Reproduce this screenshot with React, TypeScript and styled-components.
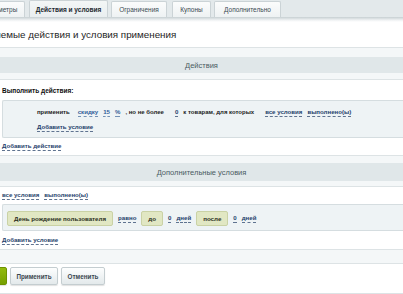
import React from 'react';
import styled, { createGlobalStyle } from 'styled-components';

const GlobalStyle = createGlobalStyle`
  html, body {
    margin: 0;
    padding: 0;
    background: #fff;
    overflow: hidden;
  }
  body {
    font-family: "Liberation Sans", Arial, sans-serif;
    color: #000;
  }
`;

const Page = styled.div`
  width: 403px;
  height: 294px;
  overflow: hidden;
  display: flex;
  flex-direction: column;
`;

const TabBar = styled.div`
  height: 17px;
  flex-shrink: 0;
  background: #e3e9eb;
  display: flex;
  align-items: flex-end;
  gap: 3px;
`;

const Tab = styled.div<{ active?: boolean; w: number; offset?: number }>`
  width: ${p => p.w}px;
  height: ${p => (p.active ? 17 : 16)}px;
  box-sizing: border-box;
  margin-left: ${p => p.offset ?? 0}px;
  display: flex;
  align-items: center;
  justify-content: center;
  font-size: 6.5px;
  font-weight: ${p => (p.active ? 'bold' : 'normal')};
  color: ${p => (p.active ? '#1d2a30' : '#3a4a52')};
  background: ${p => (p.active ? 'linear-gradient(#f3f6f6, #e9eef0)' : 'linear-gradient(#fbfcfc, #eef2f3)')};
  border: 1px solid #cbd3d6;
  border-bottom: none;
  border-radius: 2px 2px 0 0;
  white-space: nowrap;
  flex-shrink: 0;
`;

const TabShadow = styled.div`
  height: 5px;
  flex-shrink: 0;
  background: linear-gradient(#c6cfd2, #eef1f2 60%, #fff);
`;

const Title = styled.div`
  height: 25px;
  flex-shrink: 0;
  display: flex;
  align-items: center;
  margin-left: -40px;
  font-size: 9.8px;
  color: #1e1e1e;
  white-space: nowrap;
`;

const SectionHead = styled.div<{ top: number; bottom: number }>`
  flex-shrink: 0;
  background: #f4f7f8;
  padding: ${p => p.top}px 0 ${p => p.bottom}px;
  border-top: 1px solid #dde3e5;
  border-bottom: 1px solid #dde3e5;
`;

const SectionBar = styled.div<{ h: number }>`
  height: ${p => p.h}px;
  background: #e0e7e9;
  display: flex;
  align-items: center;
  justify-content: center;
  font-size: 7.5px;
  color: #4a5b62;
`;

const Body = styled.div`
  flex-shrink: 0;
  padding-left: 2px;
  display: flex;
  flex-direction: column;
`;

const Label = styled.div`
  font-size: 6.5px;
  font-weight: bold;
  color: #111;
  height: 20px;
  display: flex;
  align-items: center;
`;

const Box = styled.div<{ pad: number }>`
  background: #eef3f5;
  border: 1px solid #d5dde0;
  border-right: none;
  border-radius: 2px 0 0 2px;
  padding: 3px 0 2px ${p => p.pad}px;
  display: flex;
  flex-direction: column;
`;

const Row = styled.div<{ h: number }>`
  display: flex;
  align-items: center;
  height: ${p => p.h}px;
  gap: 5px;
  white-space: nowrap;
  font-size: 6px;
  font-weight: bold;
  color: #1c1c1c;
`;

const Link = styled.span<{ light?: boolean }>`
  color: ${p => (p.light ? '#33609a' : '#1f3f6c')};
  font-weight: bold;
  font-size: 6.1px;
  border-bottom: 1px dashed ${p => (p.light ? '#7391b6' : '#5f7390')};
  line-height: 8px;
  white-space: nowrap;
`;

const Word = styled.span<{ mr?: number }>`
  margin-right: ${p => p.mr ?? 0}px;
`;

const Chip = styled.span`
  background: #e1e7c3;
  border: 1px solid #cad2a5;
  border-radius: 2px;
  height: 15px;
  box-sizing: border-box;
  padding: 0 6px;
  display: flex;
  align-items: center;
  font-size: 6.2px;
  font-weight: bold;
  color: #2b2f1c;
`;

const Line = styled.div<{ h: number }>`
  height: ${p => p.h}px;
  display: flex;
  align-items: center;
  gap: 5px;
`;

const Footer = styled.div`
  flex-shrink: 0;
  background: #f4f7f8;
  height: 13px;
  border-top: 1px solid #dde3e5;
  border-bottom: 1px solid #dde3e5;
`;

const ButtonRow = styled.div`
  flex-shrink: 0;
  display: flex;
  align-items: flex-start;
  gap: 3px;
  height: 26px;
  padding-top: 3px;
  border-bottom: 1px solid #dde3e5;
`;

const Button = styled.button<{ primary?: boolean; offset?: number; w: number }>`
  width: ${p => p.w}px;
  height: 18px;
  margin: 0 0 0 ${p => p.offset ?? 0}px;
  padding: 0;
  font-family: "Liberation Sans", Arial, sans-serif;
  font-size: 6.3px;
  font-weight: bold;
  border-radius: 2px;
  border: 1px solid ${p => (p.primary ? '#6d9200' : '#c4cdd0')};
  color: ${p => (p.primary ? '#fff' : '#3a4750')};
  background: ${p => (p.primary ? 'linear-gradient(#93bb0c, #76a000)' : 'linear-gradient(#fdfefe, #e3e9eb)')};
  box-shadow: 0 1px 1px rgba(0, 0, 0, 0.12);
  white-space: nowrap;
`;

export default function App() {
  return (
    <Page>
      <GlobalStyle />
      <TabBar>
        <Tab w={50} offset={-25}>Параметры</Tab>
        <Tab active w={79} style={{ marginLeft: 1 }}>Действия и условия</Tab>
        <Tab w={56}>Ограничения</Tab>
        <Tab w={39} style={{ marginLeft: 2 }}>Купоны</Tab>
        <Tab w={67}>Дополнительно</Tab>
      </TabBar>
      <TabShadow />
      <Title>Применяемые действия и условия применения</Title>

      <SectionHead top={9} bottom={6}>
        <SectionBar h={16}>Действия</SectionBar>
      </SectionHead>
      <Body>
        <Label>Выполнить действия:</Label>
        <Box pad={34}>
          <Row h={16}>
            <Word mr={3}>применить</Word>
            <Link light>скидку</Link>
            <Link light>15</Link>
            <Link light>%</Link>
            <Word mr={6}>, но не более</Word>
            <Link>0</Link>
            <Word mr={6}>к товарам, для которых</Word>
            <Link>все условия</Link>
            <Link>выполнено(ы)</Link>
          </Row>
          <Row h={15}>
            <Link>Добавить условие</Link>
          </Row>
        </Box>
        <Line h={17}>
          <Link>Добавить действие</Link>
        </Line>
      </Body>

      <SectionHead top={7} bottom={5}>
        <SectionBar h={18}>Дополнительные условия</SectionBar>
      </SectionHead>
      <Body>
        <Line h={17}>
          <Link>все условия</Link>
          <Link>выполнено(ы)</Link>
        </Line>
        <Box pad={4}>
          <Row h={20}>
            <Chip>День рождение пользователя</Chip>
            <Link>равно</Link>
            <Chip>до</Chip>
            <Link>0</Link>
            <Link>дней</Link>
            <Chip>после</Chip>
            <Link>0</Link>
            <Link>дней</Link>
          </Row>
        </Box>
        <Line h={18}>
          <Link>Добавить условие</Link>
        </Line>
      </Body>
      <Footer />
      <ButtonRow>
        <Button primary w={48} offset={-41}>Сохранить</Button>
        <Button w={48}>Применить</Button>
        <Button w={44}>Отменить</Button>
      </ButtonRow>
    </Page>
  );
}
